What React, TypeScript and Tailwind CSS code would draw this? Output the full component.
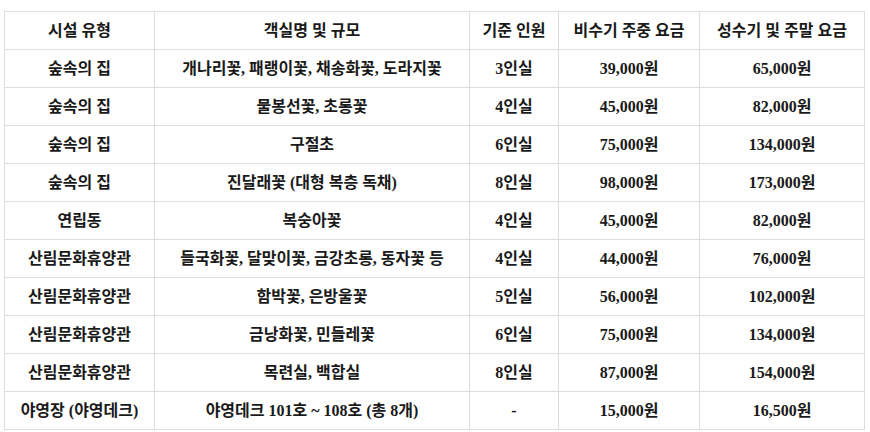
import React from "react";

const rows: string[][] = [
  ["숲속의 집", "개나리꽃, 패랭이꽃, 채송화꽃, 도라지꽃", "3인실", "39,000원", "65,000원"],
  ["숲속의 집", "물봉선꽃, 초롱꽃", "4인실", "45,000원", "82,000원"],
  ["숲속의 집", "구절초", "6인실", "75,000원", "134,000원"],
  ["숲속의 집", "진달래꽃 (대형 복층 독채)", "8인실", "98,000원", "173,000원"],
  ["연립동", "복숭아꽃", "4인실", "45,000원", "82,000원"],
  ["산림문화휴양관", "들국화꽃, 달맞이꽃, 금강초롱, 동자꽃 등", "4인실", "44,000원", "76,000원"],
  ["산림문화휴양관", "함박꽃, 은방울꽃", "5인실", "56,000원", "102,000원"],
  ["산림문화휴양관", "금낭화꽃, 민들레꽃", "6인실", "75,000원", "134,000원"],
  ["산림문화휴양관", "목련실, 백합실", "8인실", "87,000원", "154,000원"],
  ["야영장 (야영데크)", "야영데크 101호 ~ 108호 (총 8개)", "-", "15,000원", "16,500원"],
];

const headers = ["시설 유형", "객실명 및 규모", "기준 인원", "비수기 주중 요금", "성수기 및 주말 요금"];

export default function App() {
  return (
    <div className="bg-white w-[870px] h-[432px] pt-[11px] pl-[4px] text-[#1a1a1a] font-['Liberation_Serif','Noto_Sans_CJK_KR',serif]">
      <table className="table-fixed border-collapse w-[860px]">
        <colgroup>
          <col className="w-[150px]" />
          <col className="w-[315px]" />
          <col className="w-[89px]" />
          <col className="w-[141px]" />
          <col className="w-[165px]" />
        </colgroup>
        <thead>
          <tr className="h-[38px]">
            {headers.map((h) => (
              <th key={h} className="border border-[#dddddd] text-center text-[16px] font-semibold p-0">
                {h}
              </th>
            ))}
          </tr>
        </thead>
        <tbody>
          {rows.map((r, i) => (
            <tr key={i} className="h-[38px]">
              {r.map((c, j) => (
                <td key={j} className="border border-[#dddddd] text-center text-[16px] font-semibold p-0">
                  {c}
                </td>
              ))}
            </tr>
          ))}
        </tbody>
      </table>
    </div>
  );
}
